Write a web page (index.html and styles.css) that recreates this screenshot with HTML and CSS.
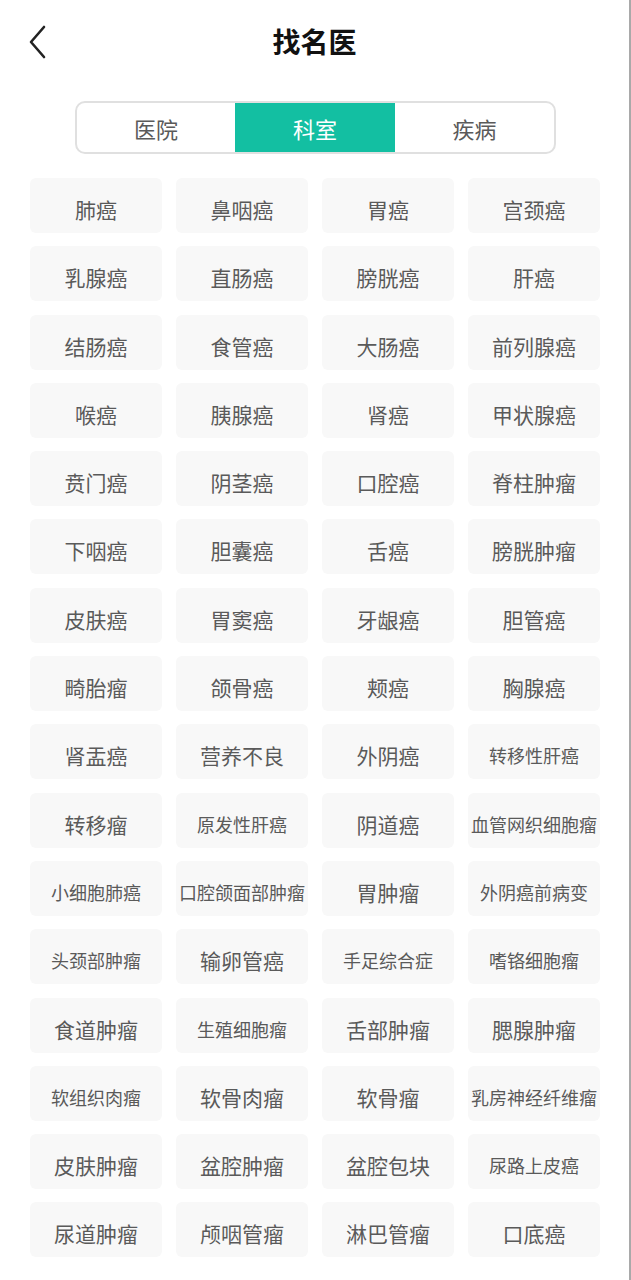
FILE: index.html
```html
<!DOCTYPE html>
<html lang="zh-CN">
<head>
<meta charset="utf-8">
<title>找名医</title>
<link rel="stylesheet" href="styles.css">
</head>
<body>
<div class="page">
  <header class="header">
    <span class="back">
      <svg width="20" height="34" viewBox="0 0 20 34"><path d="M16 2 L3 17 L16 32" fill="none" stroke="#222" stroke-width="2.6" stroke-linecap="round" stroke-linejoin="round"/></svg>
    </span>
    <h1 class="title">找名医</h1>
  </header>
  <div class="tabs">
    <div class="tab">医院</div>
    <div class="tab active">科室</div>
    <div class="tab">疾病</div>
  </div>
  <div class="grid">
    <div class="cell">肺癌</div><div class="cell">鼻咽癌</div><div class="cell">胃癌</div><div class="cell">宫颈癌</div>
    <div class="cell">乳腺癌</div><div class="cell">直肠癌</div><div class="cell">膀胱癌</div><div class="cell">肝癌</div>
    <div class="cell">结肠癌</div><div class="cell">食管癌</div><div class="cell">大肠癌</div><div class="cell">前列腺癌</div>
    <div class="cell">喉癌</div><div class="cell">胰腺癌</div><div class="cell">肾癌</div><div class="cell">甲状腺癌</div>
    <div class="cell">贲门癌</div><div class="cell">阴茎癌</div><div class="cell">口腔癌</div><div class="cell">脊柱肿瘤</div>
    <div class="cell">下咽癌</div><div class="cell">胆囊癌</div><div class="cell">舌癌</div><div class="cell">膀胱肿瘤</div>
    <div class="cell">皮肤癌</div><div class="cell">胃窦癌</div><div class="cell">牙龈癌</div><div class="cell">胆管癌</div>
    <div class="cell">畸胎瘤</div><div class="cell">颌骨癌</div><div class="cell">颊癌</div><div class="cell">胸腺癌</div>
    <div class="cell">肾盂癌</div><div class="cell">营养不良</div><div class="cell">外阴癌</div><div class="cell small">转移性肝癌</div>
    <div class="cell">转移瘤</div><div class="cell small">原发性肝癌</div><div class="cell">阴道癌</div><div class="cell small">血管网织细胞瘤</div>
    <div class="cell small">小细胞肺癌</div><div class="cell small">口腔颌面部肿瘤</div><div class="cell">胃肿瘤</div><div class="cell small">外阴癌前病变</div>
    <div class="cell small">头颈部肿瘤</div><div class="cell">输卵管癌</div><div class="cell small">手足综合症</div><div class="cell small">嗜铬细胞瘤</div>
    <div class="cell">食道肿瘤</div><div class="cell small">生殖细胞瘤</div><div class="cell">舌部肿瘤</div><div class="cell">腮腺肿瘤</div>
    <div class="cell small">软组织肉瘤</div><div class="cell">软骨肉瘤</div><div class="cell">软骨瘤</div><div class="cell small">乳房神经纤维瘤</div>
    <div class="cell">皮肤肿瘤</div><div class="cell">盆腔肿瘤</div><div class="cell">盆腔包块</div><div class="cell small">尿路上皮癌</div>
    <div class="cell">尿道肿瘤</div><div class="cell">颅咽管瘤</div><div class="cell">淋巴管瘤</div><div class="cell">口底癌</div>
  </div>
</div>
</body>
</html>
```

FILE: styles.css
```css
html, body {
  margin: 0;
  padding: 0;
  background: #fff;
}
body {
  font-family: "Noto Sans CJK SC", "Noto Sans", sans-serif;
}
.page {
  width: 629px;
  min-height: 1280px;
  border-right: 2px solid #a9a9a9;
  box-sizing: content-box;
  background: #fff;
}
.header {
  position: relative;
  height: 82px;
  display: flex;
  align-items: center;
  justify-content: center;
}
.back {
  position: absolute;
  left: 28px;
  top: 25px;
  width: 20px;
  height: 34px;
  display: flex;
}
.title {
  margin: 0;
  font-size: 28px;
  font-weight: 700;
  color: #111;
  line-height: 1;
}
.tabs {
  margin: 19px 0 0 75px;
  width: 481px;
  height: 53px;
  box-sizing: border-box;
  border: 2px solid #e0e0e0;
  border-radius: 10px;
  display: grid;
  grid-template-columns: 158px 160px 1fr;
  overflow: hidden;
}
.tab {
  display: flex;
  align-items: center;
  justify-content: center;
  font-size: 22px;
  color: #5a5a5a;
}
.tab.active {
  background: #13bfa2;
  color: #fff;
  margin: -2px 0;
}
.grid {
  margin: 24px 0 0 30px;
  display: grid;
  grid-template-columns: repeat(4, 132px);
  grid-auto-rows: 55px;
  column-gap: 14px;
  row-gap: 13.3px;
}
.cell {
  background: #f8f8f8;
  border-radius: 6px;
  display: flex;
  align-items: center;
  justify-content: center;
  padding-top: 7px;
  box-sizing: border-box;
  font-size: 21px;
  color: #5a5a5a;
  white-space: nowrap;
}
.cell.small {
  font-size: 18px;
}
```
